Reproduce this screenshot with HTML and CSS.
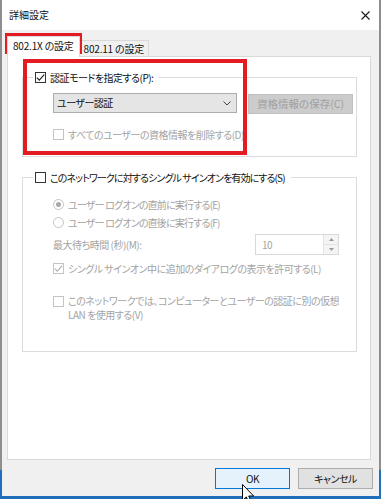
FILE: index.html
```html
<!DOCTYPE html>
<html lang="ja">
<head>
    <meta charset="UTF-8">
    <meta name="viewport" content="width=device-width, initial-scale=1.0">
    <title>詳細設定</title>
    <link rel="stylesheet" href="styles.css">
</head>
<body>
    <div class="window">
        <div class="titlebar">
            <span class="title">詳細設定</span>
            <svg class="close" width="9" height="9" viewBox="0 0 9 9">
                <path d="M0.5 0.5L8.5 8.5M8.5 0.5L0.5 8.5" stroke="#1a1a1a" stroke-width="1.1" fill="none"/>
            </svg>
        </div>
        <div class="content">
            <div class="tabs">
                <div class="tab active">802.1X の設定</div>
                <div class="tab">802.11 の設定</div>
            </div>
            <div class="panel">
                <fieldset class="group group-auth">
                    <legend><span class="legend-inner"><span class="check"><svg width="9" height="9" viewBox="0 0 9 9"><path d="M0.8 4.6L3.3 7.1L8.2 1.6" stroke="#222" stroke-width="1.2" fill="none"/></svg></span>認証モードを指定する(P):</span></legend>
                    <div class="mode-row">
                        <div class="combo">
                            <span>ユーザー認証</span>
                            <svg width="8" height="5" viewBox="0 0 8 5"><path d="M0.5 0.5L4 4L7.5 0.5" stroke="#444" stroke-width="1" fill="none"/></svg>
                        </div>
                        <div class="btn btn-disabled">資格情報の保存(C)</div>
                    </div>
                    <div class="option disabled row-delete"><span class="check"></span>すべてのユーザーの資格情報を削除する(D)</div>
                </fieldset>

                <fieldset class="group group-sso">
                    <legend><span class="legend-inner"><span class="check"></span>このネットワークに対するシングル サインオンを有効にする(S)</span></legend>
                    <div class="option disabled tight row-before"><span class="radio"><span class="dot"></span></span>ユーザー ログオンの直前に実行する(E)</div>
                    <div class="option disabled tight row-after"><span class="radio"></span>ユーザー ログオンの直後に実行する(F)</div>
                    <div class="wait-row disabled">
                        <span>最大待ち時間 (秒)(M):</span>
                        <div class="spin">
                            <span class="spin-value">10</span>
                            <div class="spin-buttons">
                                <span class="spin-up"><svg width="5" height="3" viewBox="0 0 5 3"><path d="M0 3L2.5 0L5 3Z" fill="#9a9a9a"/></svg></span>
                                <span class="spin-down"><svg width="5" height="3" viewBox="0 0 5 3"><path d="M0 0L2.5 3L5 0Z" fill="#9a9a9a"/></svg></span>
                            </div>
                        </div>
                    </div>
                    <div class="option disabled row-dialog"><span class="check"><svg width="9" height="9" viewBox="0 0 9 9"><path d="M0.8 4.6L3.3 7.1L8.2 1.6" stroke="#b0b0b0" stroke-width="1.1" fill="none"/></svg></span>シングル サインオン中に追加のダイアログの表示を許可する(L)</div>
                    <div class="option disabled row-vlan"><span class="check"></span><span>このネットワークでは、コンピューターとユーザーの認証に別の仮想<br>LAN を使用する(V)</span></div>
                </fieldset>
            </div>
            <div class="buttons">
                <div class="btn btn-ok">OK</div>
                <div class="btn">キャンセル</div>
            </div>
        </div>

        <div class="mark mark-tab"></div>
        <div class="mark mark-auth"></div>

        <svg class="cursor" width="13" height="20" viewBox="0 0 13 20">
            <path d="M0.5 0.5L0.5 16.5L4.3 12.9L7 18.8L9.3 17.8L6.7 12L11.7 12Z" fill="#fff" stroke="#000" stroke-width="1"/>
        </svg>
    </div>
</body>
</html>
```

FILE: styles.css
```css
* {
    box-sizing: border-box;
}
body {
    margin: 0;
    height: 499px;
    overflow: hidden;
    background: linear-gradient(#8e8e8e 0, #8e8e8e 470px, #1f6fbd 470px);
    font-family: "Noto Sans CJK JP", "Noto Sans", sans-serif;
    font-size: 10px;
    letter-spacing: -0.5px;
    font-feature-settings: "palt";
    color: #111;
}
.window {
    position: relative;
    margin-left: 2px;
    width: 377px;
    height: 496px;
    background: #f0f0f0;
}
.titlebar {
    height: 30px;
    background: #fff;
    display: flex;
    align-items: center;
    justify-content: space-between;
    padding: 0 9px 0 7px;
}
.title {
    font-size: 10px;
    letter-spacing: 0;
    line-height: 14px;
}
.content {
    padding: 6px 8px 0 5px;
}
.tabs {
    display: flex;
    align-items: flex-end;
    height: 20px;
}
.tab {
    height: 16px;
    padding: 0 4px;
    border: 1px solid #d9d9d9;
    border-bottom: none;
    background: #f0f0f0;
    letter-spacing: -0.2px;
    line-height: 15px;
    white-space: nowrap;
}
.tab.active {
    position: relative;
    z-index: 1;
    height: 21px;
    margin-bottom: -1px;
    margin-right: -1px;
    padding: 0 5px;
    background: #fff;
    line-height: 17px;
}
.panel {
    height: 404px;
    background: #fff;
    border: 1px solid #d9d9d9;
    padding: 13px 13px 0 14px;
}
.group {
    margin: 0;
    padding: 0;
    min-width: 0;
    border: 1px solid #dcdcdc;
}
.group legend {
    margin-left: 10px;
    padding: 0 6px 0 2px;
}
.legend-inner {
    display: flex;
    align-items: center;
    gap: 4px;
    height: 15px;
    line-height: 15px;
    white-space: nowrap;
}
.group-auth {
    padding-bottom: 14px;
}
.group-sso {
    margin-top: 13px;
    padding-bottom: 29px;
}
.group-sso .legend-inner {
    letter-spacing: -0.9px;
}
.check {
    width: 11px;
    height: 11px;
    flex: none;
    border: 1px solid #333;
    background: #fff;
    display: flex;
    align-items: center;
    justify-content: center;
}
.radio {
    width: 11px;
    height: 11px;
    flex: none;
    border: 1px solid #c4c4c4;
    border-radius: 50%;
    background: #fff;
    display: flex;
    align-items: center;
    justify-content: center;
}
.radio .dot {
    width: 5px;
    height: 5px;
    border-radius: 50%;
    background: #a8a8a8;
}
.disabled {
    color: #a3a3a3;
}
.disabled .check {
    border-color: #c4c4c4;
}
.option {
    display: flex;
    align-items: center;
    gap: 4px;
    margin-left: 30px;
    line-height: 15px;
    white-space: nowrap;
}
.tight {
    letter-spacing: -0.8px;
}
.mode-row {
    display: flex;
    align-items: flex-start;
    gap: 11px;
    margin: 8px 0 0 30px;
}
.combo {
    width: 184px;
    height: 20px;
    display: flex;
    align-items: center;
    justify-content: space-between;
    padding: 0 5px 0 3px;
    background: #e5e5e5;
    border: 1px solid #adadad;
    line-height: 18px;
}
.btn {
    width: 75px;
    height: 21px;
    display: flex;
    align-items: center;
    justify-content: center;
    background: #e1e1e1;
    border: 1px solid #adadad;
    line-height: 18px;
    white-space: nowrap;
}
.btn-disabled {
    width: 105px;
    height: 20px;
    margin-top: 1px;
    background: #cccccc;
    border-color: #bfbfbf;
    color: #a0a0a0;
    font-size: 10.5px;
    letter-spacing: 0;
}
.row-delete {
    margin-top: 13px;
}
.row-before {
    margin-top: 12px;
}
.row-after {
    margin-top: 3px;
}
.wait-row {
    display: flex;
    align-items: center;
    justify-content: space-between;
    margin: 4px 17px 0 30px;
}
.spin {
    width: 84px;
    height: 21px;
    display: flex;
    align-items: stretch;
    justify-content: space-between;
    border: 1px solid #d9d9d9;
    background: #fff;
}
.spin-value {
    padding-left: 6px;
    line-height: 19px;
}
.spin-buttons {
    width: 15px;
    display: flex;
    flex-direction: column;
    border-left: 1px solid #e3e3e3;
}
.spin-buttons span {
    flex: 1;
    display: flex;
    align-items: center;
    justify-content: center;
    background: #f4f4f4;
}
.spin-up {
    border-bottom: 1px solid #e3e3e3;
}
.row-dialog {
    margin-top: 6px;
}
.row-vlan {
    margin-top: 18px;
    align-items: flex-start;
    line-height: 14px;
}
.row-vlan .check {
    margin-top: 2px;
}
.buttons {
    display: flex;
    justify-content: flex-end;
    gap: 8px;
    margin: 8px -2px 0 0;
}
.btn-ok {
    background: #e5f1fb;
    border-color: #0078d7;
}
.mark {
    position: absolute;
    border: 4px solid #e31b23;
}
.mark-tab {
    left: 3px;
    top: 33px;
    width: 77px;
    height: 21px;
}
.mark-auth {
    left: 21px;
    top: 59px;
    width: 224px;
    height: 96px;
}
.cursor {
    position: absolute;
    left: 240px;
    top: 484px;
}
```
